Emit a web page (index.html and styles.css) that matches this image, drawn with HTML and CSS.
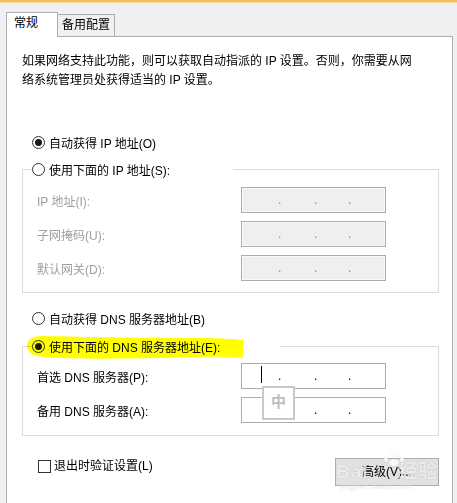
FILE: index.html
```html
<!DOCTYPE html>
<html lang="zh-CN">
<head>
<meta charset="utf-8">
<title>Internet 协议版本 4 属性</title>
<link rel="stylesheet" href="styles.css">
</head>
<body>
<div class="topbar"></div>
<div class="tabs">
  <div class="tab active">常规</div>
  <div class="tab">备用配置</div>
</div>
<div class="panel">
  <p class="intro">如果网络支持此功能，则可以获取自动指派的 IP 设置。否则，你需要从网<br>络系统管理员处获得适当的 IP 设置。</p>

  <div class="radio-row first"><span class="radio on"></span><span>自动获得 IP 地址(O)</span></div>
  <fieldset class="group ip-group">
    <legend class="legend lg-ip"><span class="radio"></span><span>使用下面的 IP 地址(S):</span></legend>
    <div class="field first-field"><span class="label dis">IP 地址(I):</span><div class="ipbox disabled"><span class="d d1">.</span><span class="d d2">.</span><span class="d d3">.</span></div></div>
    <div class="field"><span class="label dis">子网掩码(U):</span><div class="ipbox disabled"><span class="d d1">.</span><span class="d d2">.</span><span class="d d3">.</span></div></div>
    <div class="field"><span class="label dis">默认网关(D):</span><div class="ipbox disabled"><span class="d d1">.</span><span class="d d2">.</span><span class="d d3">.</span></div></div>
  </fieldset>

  <div class="radio-row dns-auto"><span class="radio"></span><span>自动获得 DNS 服务器地址(B)</span></div>
  <fieldset class="group dns-group">
    <legend class="legend lg-dns"><span class="radio on"></span><span>使用下面的 DNS 服务器地址(E):</span></legend>
    <div class="field dns-first"><span class="label">首选 DNS 服务器(P):</span><div class="ipbox"><i class="caret"></i><span class="d d1">.</span><span class="d d2">.</span><span class="d d3">.</span></div></div>
    <div class="field"><span class="label">备用 DNS 服务器(A):</span><div class="ipbox"><span class="d d1">.</span><span class="d d2">.</span><span class="d d3">.</span></div></div>
  </fieldset>

  <div class="bottom-row">
    <div class="check-row"><span class="checkbox"></span><span>退出时验证设置(L)</span></div>
    <div class="button">高级(V)...</div>
  </div>
</div>

<svg class="highlight" width="457" height="503" viewBox="0 0 457 503" aria-hidden="true">
  <path d="M27,346 C27,339 33,336 44,336 C80,337 150,338 200,338 C220,338 235,339 243,340 L243,358 C225,356 200,357 160,358 C110,359 70,359 45,357 C32,356 27,352 27,346 Z" fill="#ffff00"/>
</svg>

<div class="ime">中</div>

<div class="watermark">
  <div class="paw"><span></span><span></span><span></span><span></span><i></i></div>
  <div class="wm-text">Bai<span class="wm-gap"></span>经验</div>
  <div class="wm-url">jingyan.baidu.com</div>
</div>
</body>
</html>
```

FILE: styles.css
```css
html, body {
  margin: 0;
  padding: 0;
}
body {
  width: 457px;
  height: 503px;
  overflow: hidden;
  background: #f0f0f0;
  font-family: "Liberation Sans", "Noto Sans CJK SC", sans-serif;
  font-size: 12px;
  color: #000;
  position: relative;
}
.topbar {
  height: 2px;
  background: #efc163;
  border-bottom: 1px solid #f5d89c;
}
.tabs {
  display: flex;
  align-items: flex-end;
  height: 24px;
  margin-top: 9px;
  padding-left: 6px;
}
.tab {
  box-sizing: border-box;
  height: 22px;
  width: 57px;
  border-top: 1px solid #adadad;
  border-right: 1px solid #adadad;
  background: #f0f0f0;
  text-align: center;
  line-height: 20px;
}
.tab.active {
  position: relative;
  z-index: 1;
  width: 52px;
  height: 25px;
  margin-bottom: -1px;
  border: 1px solid #adadad;
  border-bottom: none;
  background: #fff;
  text-align: left;
  padding-left: 7px;
  line-height: 20px;
}
.panel {
  box-sizing: border-box;
  margin-left: 6px;
  width: 447px;
  height: 467px;
  border: 1px solid #adadad;
  border-bottom: none;
  background: #fff;
  display: flex;
  flex-direction: column;
}
.intro {
  margin: 15px 0 0 15px;
  line-height: 19px;
  white-space: nowrap;
}
.radio-row {
  display: flex;
  align-items: center;
  height: 19px;
  padding-left: 25px;
}
.radio-row.first {
  margin-top: 43px;
}
.radio-row.dns-auto {
  margin-top: 16px;
}
.radio {
  box-sizing: border-box;
  flex: none;
  width: 13px;
  height: 13px;
  border: 1px solid #333;
  border-radius: 50%;
  background: #fff;
  display: flex;
  align-items: center;
  justify-content: center;
  margin-right: 4px;
}
.radio.on::after {
  content: "";
  width: 7px;
  height: 7px;
  border-radius: 50%;
  background: #1a1a1a;
}
.group {
  box-sizing: border-box;
  min-width: 0;
  margin: 8px 13px 0 15px;
  padding: 0 0 11px 0;
  border: 1px solid #dcdcdc;
}
.dns-group {
  margin-top: 9px;
  padding-bottom: 12px;
}
.legend {
  box-sizing: border-box;
  display: flex;
  align-items: center;
  height: 19px;
  padding: 0;
  margin-left: 9px;
  background: #fff;
}
.lg-ip {
  width: 201px;
}
.lg-dns {
  width: 248px;
}
.field {
  display: flex;
  align-items: center;
  height: 26px;
  margin-top: 8px;
  padding-left: 14px;
}
.dns-first {
  margin-top: 7px;
}
.label {
  width: 204px;
  flex: none;
}
.label.dis {
  color: #a0a0a0;
}
.ipbox {
  position: relative;
  box-sizing: border-box;
  width: 145px;
  height: 26px;
  border: 1px solid #adadad;
  background: #fff;
  display: flex;
  padding-left: 36px;
  line-height: 24px;
  color: #000;
}
.ipbox.disabled {
  background: #efefef;
  box-shadow: inset 0 0 0 1px #f9f9f9;
  color: #8a8a9a;
}
.d {
  width: 3px;
  flex: none;
}
.d2 {
  margin-left: 33px;
}
.d3 {
  margin-left: 31px;
}
.caret {
  position: absolute;
  left: 19px;
  top: 2px;
  width: 1px;
  height: 17px;
  background: #000;
}
.bottom-row {
  display: flex;
  justify-content: space-between;
  align-items: flex-start;
  margin-top: 22px;
  padding: 0 13px 0 31px;
}
.check-row {
  display: flex;
  align-items: center;
  height: 13px;
  margin-top: 2px;
  line-height: 13px;
}
.checkbox {
  box-sizing: border-box;
  width: 13px;
  height: 13px;
  border: 1px solid #333;
  background: #fff;
  margin-right: 3px;
}
.button {
  box-sizing: border-box;
  width: 104px;
  height: 28px;
  border: 1px solid #adadad;
  background: #e1e1e1;
  text-align: center;
  line-height: 26px;
}
.highlight {
  position: absolute;
  left: 0;
  top: 0;
  pointer-events: none;
  mix-blend-mode: multiply;
}
.ime {
  position: absolute;
  left: 262px;
  top: 386px;
  box-sizing: border-box;
  width: 33px;
  height: 34px;
  border: 2px solid #c8c8c8;
  background: #fff;
  color: #bdbdbd;
  font-size: 15px;
  font-weight: bold;
  text-align: center;
  line-height: 28px;
}
.watermark {
  position: absolute;
  left: 334px;
  top: 452px;
  width: 100px;
  height: 42px;
  pointer-events: none;
  color: rgba(255, 255, 255, 0.75);
}
.paw {
  position: absolute;
  left: 50px;
  top: 0;
  width: 20px;
  height: 14px;
}
.paw span {
  position: absolute;
  width: 4px;
  height: 5px;
  border-radius: 50%;
  background: rgba(255, 255, 255, 0.8);
  box-shadow: 0 0 1px rgba(0, 0, 0, 0.3);
}
.paw span:nth-child(1) { left: 0; top: 5px; }
.paw span:nth-child(2) { left: 5px; top: 0; }
.paw span:nth-child(3) { left: 11px; top: 0; }
.paw span:nth-child(4) { left: 16px; top: 5px; }
.paw i {
  position: absolute;
  left: 5px;
  top: 7px;
  width: 10px;
  height: 7px;
  border-radius: 50%;
  background: rgba(255, 255, 255, 0.8);
  box-shadow: 0 0 1px rgba(0, 0, 0, 0.3);
}
.wm-text {
  position: absolute;
  left: 2px;
  top: 9px;
  font-size: 19px;
  font-weight: bold;
  line-height: 22px;
  letter-spacing: 1px;
  white-space: nowrap;
  text-shadow: 0 0 1px rgba(0, 0, 0, 0.25);
}
.wm-gap {
  display: inline-block;
  width: 30px;
}
.wm-url {
  position: absolute;
  left: 6px;
  top: 29px;
  font-size: 9px;
  line-height: 11px;
  white-space: nowrap;
  text-shadow: 0 0 1px rgba(0, 0, 0, 0.2);
}
```
